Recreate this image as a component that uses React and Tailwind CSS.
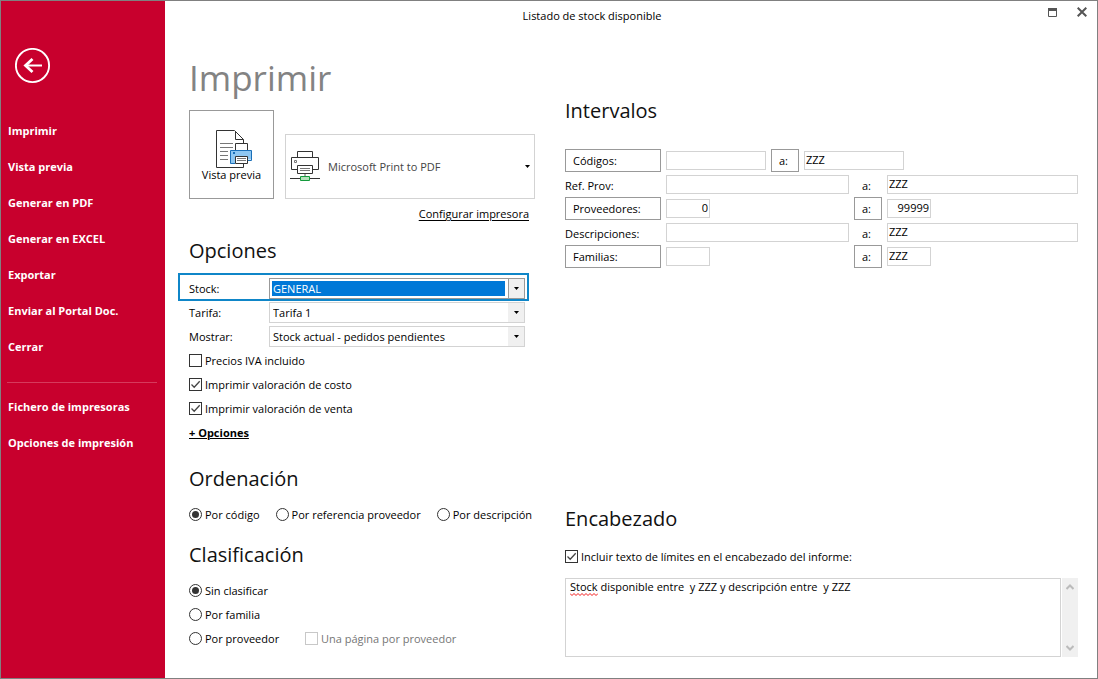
import { useState } from "react";

const MENU = [
  "Imprimir",
  "Vista previa",
  "Generar en PDF",
  "Generar en EXCEL",
  "Exportar",
  "Enviar al Portal Doc.",
  "Cerrar",
];

const MENU_BOTTOM = ["Fichero de impresoras", "Opciones de impresión"];

/* ── Icons ─────────────────────────────────────────────────────────────── */

function BackIcon() {
  return (
    <svg className="w-9 h-9" viewBox="0 0 36 36" fill="none" stroke="#fff">
      <circle cx="17.5" cy="17.5" r="16.6" strokeWidth="1.9" />
      <path d="M10.5 17.5H27" strokeWidth="2" />
      <path d="M17.5 11L10.5 17.5L17.5 24" strokeWidth="2.8" />
    </svg>
  );
}

function PreviewIcon() {
  return (
    <svg className="w-[37px] h-[39px] ml-1.5" viewBox="0 0 37 39" fill="none">
      <path d="M27.5 14V9.5L18.5 0.5H0.5V37.5H27.5V34" fill="#fff" stroke="#333" />
      <path d="M19.5 1V9.5H27.5" stroke="#333" />
      <path d="M4 13.5H17M4 17.5H17M4 21.5H12M4 25.5H12M4 29.5H12" stroke="#777" />
      <path d="M19.5 20V13.5H31.5V20" fill="#fff" stroke="#333" />
      <path d="M14.5 20.5H35.5V29.5H32V27H19V33.5H14.5Z" fill="#8ec7f2" />
      <path d="M19 33.5H14.5V20.5H35.5V30.5H32" stroke="#1a6fb8" />
      <path d="M17 22H19V24H17Z" fill="#1a6fb8" />
      <path d="M19.5 26.5H31.5V33.5H19.5Z" fill="#fff" stroke="#333" />
      <path d="M21 28.5H30M21 30.5H30" stroke="#777" />
    </svg>
  );
}

function PrinterIcon() {
  return (
    <svg className="w-[30px] h-[31px] shrink-0" viewBox="0 0 30 31" fill="none">
      <path d="M7.5 6V0.5H22.5V6" stroke="#333" />
      <path d="M7 18.5H1.5V6.5H28.5V18.5H23" stroke="#333" />
      <path d="M4.5 9.5H6.5V11.5H4.5Z" stroke="#777" />
      <path d="M7.5 14.5H22.5V22.5H7.5Z" fill="#fff" stroke="#333" />
      <path d="M10 17.5H20M10 19.5H20" stroke="#777" />
      <path d="M15 23V25" stroke="#aaa" strokeWidth="2" />
      <path d="M0 27.5H10M20 27.5H30" stroke="#333" />
      <path d="M10.5 25.5H19.5V29.5H10.5Z" fill="#b3dfba" stroke="#149a3c" />
    </svg>
  );
}

function Caret() {
  return (
    <svg className="w-[5px] h-[3px]" viewBox="0 0 5 3" fill="currentColor">
      <path d="M0 0H5L2.5 3Z" />
    </svg>
  );
}

/* ── Form controls ─────────────────────────────────────────────────────── */

function Heading({ children }) {
  return <h2 className="h-8 leading-8 text-xl text-[#111]">{children}</h2>;
}

function Check({ label, disabled, defaultChecked }) {
  const [on, setOn] = useState(Boolean(defaultChecked));
  return (
    <label className={`flex items-center gap-[3px] h-6 ${disabled ? "text-[#767676]" : ""}`}>
      <span className="relative flex w-[13px] h-[13px] mb-px">
        <input
          type="checkbox"
          checked={on}
          disabled={disabled}
          onChange={(e) => setOn(e.target.checked)}
          className="appearance-none w-[13px] h-[13px] border border-[#333] bg-white disabled:border-[#c8c8c8]"
        />
        {on && (
          <svg className="absolute inset-0 pointer-events-none" viewBox="0 0 13 13" fill="none">
            <path d="M2.5 6.5L5.2 9.2L10.7 3.2" stroke="#444" strokeWidth="1.3" />
          </svg>
        )}
      </span>
      {label}
    </label>
  );
}

function Radio({ name, label, defaultChecked }) {
  return (
    <label className="flex items-center gap-[3px] h-6">
      <span className="relative flex w-[13px] h-[13px] mb-px">
        <input
          type="radio"
          name={name}
          defaultChecked={defaultChecked}
          className="peer appearance-none w-[13px] h-[13px] rounded-full border border-[#333] bg-white"
        />
        <span className="absolute inset-[3px] rounded-full bg-[#333] pointer-events-none hidden peer-checked:block" />
      </span>
      {label}
    </label>
  );
}

function Select({ id, label, options, active }) {
  return (
    <div
      className={`flex items-center ${
        active ? "h-7 -mt-1 -ml-[11px] -mr-1 pt-1 pl-[9px] pr-0.5 border-2 border-[#0f86c8]" : "h-6"
      }`}
    >
      <label htmlFor={id} className="w-20 shrink-0">{label}</label>
      <div className={`relative flex flex-1 h-[21px] mb-px border ${active ? "border-[#999] p-0.5" : "border-[#d3d3d3]"}`}>
        <select
          id={id}
          className={`appearance-none w-full outline-none ${
            active ? "bg-[#0078d7] text-white pl-px mr-[17px]" : "bg-white pl-[3px]"
          }`}
        >
          {options.map((o) => <option key={o}>{o}</option>)}
        </select>
        <span
          className={`absolute right-0 inset-y-0 w-4 flex items-center justify-center bg-[#f0f0f0] pointer-events-none ${
            active ? "border-l border-[#999]" : ""
          }`}
        >
          <Caret />
        </span>
      </div>
    </div>
  );
}

function Field({ label, value = "", className }) {
  return (
    <input
      type="text"
      aria-label={label}
      defaultValue={value}
      className={`h-[19px] min-w-0 mb-px px-px pb-0.5 border border-[#d3d3d3] bg-white outline-none ${className}`}
    />
  );
}

function BoxButton({ children, className }) {
  return (
    <button type="button" className={`h-[23px] shrink-0 mb-px text-left pl-[7px] border border-[#999] bg-white ${className}`}>
      {children}
    </button>
  );
}

/* ── Sections ──────────────────────────────────────────────────────────── */

function Sidebar() {
  return (
    <aside className="w-[164px] shrink-0 bg-[#c8002d] text-white font-bold pl-[7px] pr-2 pt-[47px]">
      <button type="button" aria-label="Volver" className="block ml-[7px]">
        <BackIcon />
      </button>
      <nav className="pt-[29px]">
        {MENU.map((item) => (
          <a key={item} href="#" className="flex items-center h-9">{item}</a>
        ))}
        <hr className="mt-[17px] mb-[6px] -ml-px border-[#d63a5c]" />
        {MENU_BOTTOM.map((item) => (
          <a key={item} href="#" className="flex items-center h-9">{item}</a>
        ))}
      </nav>
    </aside>
  );
}

function TitleBar() {
  return (
    <header className="flex items-center h-[30px]">
      <h1 className="flex-1 text-center">Listado de stock disponible</h1>
      <div className="flex items-center gap-5 w-[78px] pl-[29px] pb-2">
        <button type="button" aria-label="Maximizar">
          <svg className="w-[9px] h-[9px]" viewBox="0 0 9 9" fill="none">
            <path d="M0.5 0.5H8.5V8.5H0.5Z" stroke="#555" />
            <path d="M0 0H9V3H0Z" fill="#555" />
          </svg>
        </button>
        <button type="button" aria-label="Cerrar ventana">
          <svg className="w-2.5 h-2.5" viewBox="0 0 10 10" fill="none">
            <path d="M0.7 0.7L9.3 9.3M9.3 0.7L0.7 9.3" stroke="#555" strokeWidth="2" />
          </svg>
        </button>
      </div>
    </header>
  );
}

function PrintOptions() {
  return (
    <section className="w-[376px] shrink-0">
      <h2 className="h-14 leading-14 text-[35px] text-[#838383]">Imprimir</h2>

      <div className="flex items-end gap-[11px] w-[346px] mt-1">
        <button
          type="button"
          className="flex flex-col items-center justify-center w-[85px] h-[89px] shrink-0 pt-0.5 border border-[#999] bg-white leading-3"
        >
          <PreviewIcon />
          Vista previa
        </button>
        <div className="relative flex items-center flex-1 h-[65px] pl-1 border border-[#d3d3d3]">
          <PrinterIcon />
          <select
            aria-label="Impresora"
            className="appearance-none flex-1 h-full pl-2 text-[#444] bg-transparent outline-none"
          >
            <option>Microsoft Print to PDF</option>
          </select>
          <span className="absolute right-1 pointer-events-none"><Caret /></span>
        </div>
      </div>
      <div className="flex justify-end w-[340px] mt-[5px]">
        <a href="#" className="leading-5 underline underline-offset-2">Configurar impresora</a>
      </div>

      <div className="mt-[11px]">
        <Heading>Opciones</Heading>
        <div className="w-[336px] mt-[10px]">
          <Select id="stock" label="Stock:" options={["GENERAL"]} active />
          <Select id="tarifa" label="Tarifa:" options={["Tarifa 1"]} />
          <Select id="mostrar" label="Mostrar:" options={["Stock actual - pedidos pendientes"]} />
          <Check label="Precios IVA incluido" />
          <Check label="Imprimir valoración de costo" defaultChecked />
          <Check label="Imprimir valoración de venta" defaultChecked />
          <a href="#" className="inline-block leading-6 font-bold underline">+ Opciones</a>
        </div>
      </div>

      <div className="mt-[18px]">
        <Heading>Ordenación</Heading>
        <div className="flex gap-4 mt-2">
          <Radio name="orden" label="Por código" defaultChecked />
          <Radio name="orden" label="Por referencia proveedor" />
          <Radio name="orden" label="Por descripción" />
        </div>
      </div>

      <div className="mt-3">
        <Heading>Clasificación</Heading>
        <div className="mt-2">
          <Radio name="clase" label="Sin clasificar" defaultChecked />
          <Radio name="clase" label="Por familia" />
          <div className="flex">
            <div className="w-[116px]"><Radio name="clase" label="Por proveedor" /></div>
            <Check label="Una página por proveedor" disabled />
          </div>
        </div>
      </div>
    </section>
  );
}

function Ranges() {
  return (
    <div>
      <Heading>Intervalos</Heading>
      <div className="mt-[22px]">
        <div className="flex items-center gap-[5px] h-6">
          <BoxButton className="w-24">Códigos:</BoxButton>
          <Field label="Código desde" className="w-[100px]" />
          <BoxButton className="w-7">a:</BoxButton>
          <Field label="Código hasta" value="ZZZ" className="w-[100px]" />
        </div>
        <div className="flex items-center gap-[5px] h-6">
          <span className="w-24 shrink-0 pt-0.5">Ref. Prov:</span>
          <Field label="Referencia desde" className="w-[183px]" />
          <span className="w-7 shrink-0 pl-2 pt-0.5">a:</span>
          <Field label="Referencia hasta" value="ZZZ" className="flex-1" />
        </div>
        <div className="flex items-center gap-[5px] h-6">
          <BoxButton className="w-24">Proveedores:</BoxButton>
          <div className="flex w-[183px]"><Field label="Proveedor desde" value="0" className="w-11 text-right" /></div>
          <BoxButton className="w-7">a:</BoxButton>
          <Field label="Proveedor hasta" value="99999" className="w-11 text-right" />
        </div>
        <div className="flex items-center gap-[5px] h-6">
          <span className="w-24 shrink-0 pt-0.5">Descripciones:</span>
          <Field label="Descripción desde" className="w-[183px]" />
          <span className="w-7 shrink-0 pl-2 pt-0.5">a:</span>
          <Field label="Descripción hasta" value="ZZZ" className="flex-1" />
        </div>
        <div className="flex items-center gap-[5px] h-6">
          <BoxButton className="w-24">Familias:</BoxButton>
          <div className="flex w-[183px]"><Field label="Familia desde" className="w-11" /></div>
          <BoxButton className="w-7">a:</BoxButton>
          <Field label="Familia hasta" value="ZZZ" className="w-11" />
        </div>
      </div>
    </div>
  );
}

function ReportHeader() {
  return (
    <div>
      <Heading>Encabezado</Heading>
      <div className="mt-[10px]">
        <Check label="Incluir texto de límites en el encabezado del informe:" defaultChecked />
      </div>
      <div className="flex gap-px h-[79px] mt-[9px]">
        <div className="relative flex flex-1">
          <textarea
            aria-label="Texto del encabezado"
            spellCheck={false}
            defaultValue="Stock disponible entre  y ZZZ y descripción entre  y ZZZ"
            className="w-full px-1 leading-4 border border-[#d3d3d3] resize-none outline-none overflow-hidden"
          />
          {/* spelling mark under the first word */}
          <svg className="absolute left-[5px] top-[15px] w-7 h-[3px] pointer-events-none" viewBox="0 0 28 3" fill="none">
            <path
              d="M0 0.5L2 2.5L4 0.5L6 2.5L8 0.5L10 2.5L12 0.5L14 2.5L16 0.5L18 2.5L20 0.5L22 2.5L24 0.5L26 2.5L28 0.5"
              stroke="#f00000"
              strokeWidth="0.9"
            />
          </svg>
        </div>
        <div className="flex flex-col items-center justify-between w-4 py-1.5 bg-[#f0f0f0]">
          <svg className="w-2 h-1.5" viewBox="0 0 8 6" fill="none">
            <path d="M0.5 5L4 1.5L7.5 5" stroke="#bbb" strokeWidth="2" />
          </svg>
          <svg className="w-2 h-1.5" viewBox="0 0 8 6" fill="none">
            <path d="M0.5 1L4 4.5L7.5 1" stroke="#bbb" strokeWidth="2" />
          </svg>
        </div>
      </div>
    </div>
  );
}

export default function App() {
  return (
    <div className="flex min-h-screen border border-[#808080] bg-white text-black text-[11px] leading-4 font-['Open_Sans','Noto_Sans',sans-serif]">
      <Sidebar />
      <main className="flex-1 min-w-0">
        <TitleBar />
        <div className="flex pl-6 pr-[19px] pt-[19px] pb-5">
          <PrintOptions />
          <section className="flex-1 min-w-0 pt-[45px]">
            <Ranges />
            <div className="mt-[234px]">
              <ReportHeader />
            </div>
          </section>
        </div>
      </main>
    </div>
  );
}
